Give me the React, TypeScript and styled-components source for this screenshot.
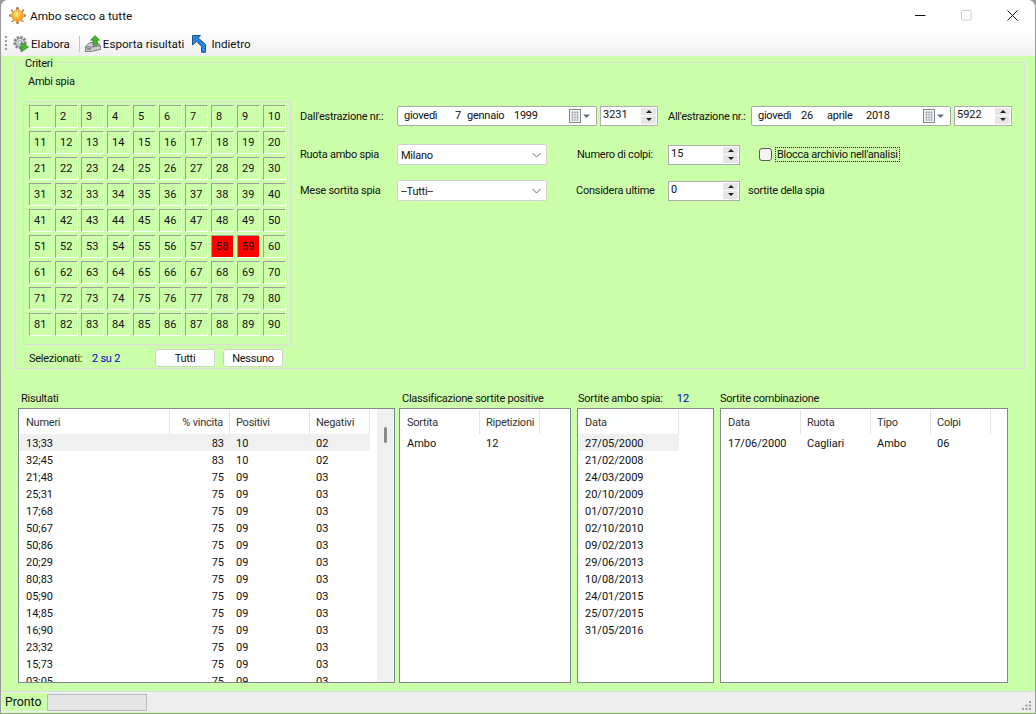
import React from 'react';
import styled, { createGlobalStyle } from 'styled-components';

const GlobalStyle = createGlobalStyle`
  html, body {
    margin: 0;
    height: 100%;
    overflow: hidden;
    background: #9a9a9a;
  }
  * {
    box-sizing: border-box;
  }
`;

const GREEN = '#ccffaa';

const Window = styled.div`
  width: 1034px;
  height: 713px;
  margin-left: 1px;
  display: flex;
  flex-direction: column;
  border-top-left-radius: 7px;
  border-top-right-radius: 7px;
  overflow: hidden;
  background: ${GREEN};
  font-family: Roboto, "Liberation Sans", sans-serif;
  font-size: 11px;
  letter-spacing: -0.25px;
  color: #111;
`;

const TitleBar = styled.div`
  height: 31px;
  flex: none;
  display: flex;
  align-items: center;
  padding-left: 8px;
  background: #fff;
`;

const Title = styled.span`
  margin-left: 4px;
  font-size: 11.8px;
  letter-spacing: 0;
  flex: 1;
`;

const WinButton = styled.div`
  width: 46px;
  height: 30px;
  display: flex;
  align-items: center;
  justify-content: center;
`;

const Toolbar = styled.div`
  height: 25px;
  flex: none;
  display: flex;
  align-items: center;
  padding-left: 4px;
  background: linear-gradient(#ffffff, #f0f0f0);
  font-size: 11.6px;
  letter-spacing: 0;
`;

const Grip = styled.div`
  width: 2px;
  height: 15px;
  margin-right: 6px;
  background: repeating-linear-gradient(#9a9a9a 0 2px, transparent 2px 4px);
`;

const ToolItem = styled.div<{ $end: number }>`
  display: flex;
  align-items: center;
  gap: 2px;
  margin-right: ${(p) => p.$end}px;
`;

const ToolSep = styled.div`
  width: 1px;
  height: 16px;
  background: #c4c4c4;
  margin-right: 5px;
`;

const Body = styled.div`
  flex: 1;
  min-height: 0;
  display: flex;
  flex-direction: column;
  padding: 6px 10px 8px 13px;
`;

const Criteria = styled.fieldset`
  position: relative;
  height: 307px;
  flex: none;
  margin: 0;
  padding: 0 0 0 8px;
  display: flex;
  border: 1px solid #dcdcdc;
`;

const Legend = styled.span`
  position: absolute;
  z-index: 1;
  left: 6px;
  top: -6px;
  padding: 0 4px;
  line-height: 13px;
  background: ${GREEN};
`;

const LeftColumn = styled.div`
  position: relative;
  width: 268px;
  flex: none;
  display: flex;
  flex-direction: column;
  &::after {
    content: '';
    position: absolute;
    left: -3px;
    right: -6px;
    bottom: -1px;
    height: 1px;
    background: ${GREEN};
  }
`;

const SpyLabel = styled.div`
  height: 38px;
  padding: 12px 0 0 5px;
  line-height: 14px;
`;

const NumberBox = styled.div`
  width: 268px;
  height: 244px;
  padding: 3px 0 0 5px;
  border: 1px solid #dcdcdc;
  display: grid;
  grid-template-columns: repeat(10, 23px);
  grid-auto-rows: 23px;
  column-gap: 3px;
  row-gap: 3px;
`;

const NumberCell = styled.div<{ $on?: boolean }>`
  display: flex;
  align-items: center;
  padding-left: 4px;
  letter-spacing: 0;
  border: 1px solid;
  border-color: #a0a0a0 #fff #fff #a0a0a0;
  background: ${(p) => (p.$on ? '#ff0000' : 'transparent')};
`;

const SelectedRow = styled.div`
  display: flex;
  align-items: center;
  height: 22px;
  margin-top: 2px;
  padding-left: 6px;
`;

const SelectedText = styled.span`
  width: 63px;
  flex: none;
`;

const SelectedCount = styled.span`
  color: #0000c0;
  width: 63px;
  flex: none;
`;

const PushButton = styled.button<{ $w: number }>`
  width: ${(p) => p.$w}px;
  height: 18px;
  margin-right: 8px;
  padding: 0;
  flex: none;
  background: #fff;
  border: 1px solid #d0d0d0;
  border-radius: 3px;
  font: inherit;
  letter-spacing: inherit;
  color: inherit;
`;

const Form = styled.div`
  margin: 42px 0 0 9px;
  display: flex;
  flex-direction: column;
`;

const FormRow = styled.div<{ $h: number }>`
  display: flex;
  align-items: center;
  height: 21px;
  margin-bottom: ${(p) => p.$h}px;
`;

const Label = styled.span<{ $w: number; $gap?: number; $down?: boolean }>`
  width: ${(p) => p.$w}px;
  margin-left: ${(p) => p.$gap ?? 0}px;
  padding-top: ${(p) => (p.$down ? 2 : 0)}px;
  flex: none;
  white-space: nowrap;
`;

const DateBox = styled.div`
  width: 200px;
  height: 20px;
  flex: none;
  display: flex;
  align-items: center;
  padding: 0 6px 0 6px;
  background: #fff;
  border: 1px solid #a8a8a8;
  border-radius: 2px;
`;

const DatePart = styled.span<{ $w: number }>`
  width: ${(p) => p.$w}px;
  flex: none;
`;

const DateIcon = styled.span`
  margin-left: auto;
  display: flex;
`;

const Spin = styled.div<{ $w: number; $gap?: number }>`
  width: ${(p) => p.$w}px;
  height: 20px;
  margin-left: ${(p) => p.$gap ?? 0}px;
  flex: none;
  display: flex;
  align-items: flex-start;
  justify-content: space-between;
  padding: 0 1px 0 2px;
  background: #fff;
  border: 1px solid #adadad;
  line-height: 15px;
  letter-spacing: 0;
`;

const SpinButtons = styled.div`
  width: 15px;
  height: 16px;
  margin-top: 1px;
  display: flex;
  flex-direction: column;
  gap: 1px;
`;

const SpinArrow = styled.div<{ $down?: boolean }>`
  flex: 1;
  display: flex;
  align-items: center;
  justify-content: center;
  background: #e6e6e6;
  &::after {
    content: '';
    border-left: 3px solid transparent;
    border-right: 3px solid transparent;
    ${(p) => (p.$down ? 'border-top: 3px solid #222;' : 'border-bottom: 3px solid #222;')}
  }
`;

const Combo = styled.div`
  width: 150px;
  height: 21px;
  flex: none;
  display: flex;
  align-items: center;
  justify-content: space-between;
  padding: 1px 5px 0 3px;
  background: #fff;
  border: 1px solid #d2d2d2;
  border-radius: 2px;
`;

const CheckBox = styled.span`
  width: 13px;
  height: 13px;
  margin-left: 19px;
  flex: none;
  background: #f4f4f4;
  border: 1px solid #5a5a5a;
  border-radius: 3px;
`;

const FocusLabel = styled.span`
  margin-left: 3px;
  padding: 0 1px;
  border: 1px dotted #222;
  line-height: 13px;
  white-space: nowrap;
`;

const Lower = styled.div`
  flex: 1;
  min-height: 0;
  display: flex;
  gap: 6px;
  margin-top: 22px;
  padding-left: 4px;
`;

const Section = styled.div<{ $w: number; $tight?: boolean }>`
  width: ${(p) => p.$w}px;
  margin-right: ${(p) => (p.$tight ? -2 : 0)}px;
  flex: none;
  display: flex;
  flex-direction: column;
`;

const SectionTitle = styled.div<{ $pad: number }>`
  height: 17px;
  display: flex;
  padding: 1px 0 0 ${(p) => p.$pad}px;
  line-height: 14px;
  white-space: nowrap;
`;

const TitleCount = styled.span`
  color: #0000c0;
  letter-spacing: 0;
  margin-left: 14px;
`;

const Panel = styled.div`
  position: relative;
  flex: 1;
  min-height: 0;
  overflow: hidden;
  background: #fff;
  border: 1px solid #828790;
`;

const HeadRow = styled.div`
  height: 25px;
  display: flex;
  align-items: center;
`;

const HeadCell = styled.div<{ $w: number; $right?: boolean }>`
  width: ${(p) => p.$w}px;
  height: 24px;
  flex: none;
  display: flex;
  align-items: center;
  justify-content: ${(p) => (p.$right ? 'flex-end' : 'flex-start')};
  padding: 2px 6px 0;
  border-right: 1px solid #e5e5e5;
  color: #333;
  &:first-child {
    padding-left: 7px;
  }
`;

const DataRow = styled.div<{ $on?: boolean; $w: number }>`
  width: ${(p) => p.$w}px;
  height: 17px;
  display: flex;
  align-items: center;
  letter-spacing: 0;
  background: ${(p) => (p.$on ? '#f0f0f0' : 'transparent')};
`;

const DataCell = styled.div<{ $w: number; $right?: boolean }>`
  width: ${(p) => p.$w}px;
  flex: none;
  padding: 1px 6px 0;
  text-align: ${(p) => (p.$right ? 'right' : 'left')};
  &:first-child {
    padding-left: 7px;
  }
`;

const ScrollTrack = styled.div`
  position: absolute;
  top: 0;
  right: 0;
  bottom: 0;
  width: 17px;
  background: #f0f0f0;
`;

const ScrollThumb = styled.div`
  position: absolute;
  top: 18px;
  left: 7px;
  width: 3px;
  height: 16px;
  background: #8a8a8a;
  border-radius: 2px;
`;

const StatusBar = styled.div`
  height: 21px;
  flex: none;
  margin-bottom: 1px;
  display: flex;
  align-items: center;
  padding-left: 1px;
  background: #eeeeee;
  border-top: 1px solid #dcdcdc;
`;

const StatusText = styled.span`
  width: 45px;
  height: 18px;
  flex: none;
  padding-left: 3px;
  font-size: 12.3px;
  letter-spacing: 0;
  line-height: 18px;
  background: ${GREEN};
`;

const Progress = styled.div`
  width: 100px;
  height: 17px;
  background: #e6e6e6;
  border: 1px solid #bcbcbc;
`;

const ResizeGrip = styled.svg`
  margin-left: auto;
  margin-right: 3px;
  align-self: flex-end;
  margin-bottom: 1px;
`;

const SunIcon = () => (
  <svg width="17" height="17" viewBox="0 0 17 17">
    <defs>
      <radialGradient id="sun" cx="0.42" cy="0.38" r="0.7">
        <stop offset="0" stopColor="#fff0a0" />
        <stop offset="0.55" stopColor="#fbb62a" />
        <stop offset="1" stopColor="#ee8a12" />
      </radialGradient>
    </defs>
    <path
      d="M8.500 0l1 2.500M8.500 0l-1 2.500M14.500 2.500l-1 2.500M2.500 2.500l1 2.500M17 8.500l-2.500 1M17 8.500l-2.500-1M0 8.500l2.500 1M0 8.500l2.500-1M8.500 17l1-2.500M8.500 17l-1-2.500M14.500 14.500l-2.500-1M2.500 14.500l2.500-1"
      stroke="#b8691c"
      strokeWidth="1.300"
    />
    <circle cx="8.500" cy="8.500" r="5.600" fill="url(#sun)" stroke="#d2811c" strokeWidth=".7" />
  </svg>
);

const GearIcon = () => (
  <svg width="16" height="18" viewBox="0 0 17 18">
    <circle cx="7.500" cy="7.500" r="5.600" fill="none" stroke="#7d858c" strokeWidth="3" strokeDasharray="2.400 1.300" />
    <circle cx="7.500" cy="7.500" r="4.600" fill="#d4d8dc" stroke="#6c7278" strokeWidth=".8" />
    <circle cx="7.500" cy="7.500" r="2" fill="#fff" stroke="#7d858c" strokeWidth=".8" />
    <path d="M8.500 7l8 5.200-8 5.300z" fill="#43b52e" stroke="#2c7d1e" strokeWidth=".7" />
  </svg>
);

const ExportIcon = () => (
  <svg width="16" height="17" viewBox="0 0 16 17">
    <path d="M.5 11.500L5 7.500h7.500l3 3.500v3.500L6 16.500H.5z" fill="#c9cdd1" stroke="#5f656a" strokeWidth=".8" />
    <path d="M.5 12h6l9-1.500" fill="none" stroke="#5f656a" strokeWidth=".8" />
    <path d="M2 14h4" stroke="#3e4347" />
    <path d="M10 .500l4.500 4.700h-2.300v5H8v-5H5.500z" fill="#45b42f" stroke="#2c7d1e" strokeWidth=".7" />
  </svg>
);

const BackIcon = () => (
  <svg width="17" height="18" viewBox="0 0 17 18">
    <path d="M.5.500h8L6.200 3l7.300 6.300v8h-4v-6L4.500 6.500.5 10z" fill="#2d86dc" stroke="#164a90" strokeWidth=".9" />
  </svg>
);

const CalendarIcon = () => (
  <svg width="21" height="14" viewBox="0 0 21 14">
    <rect x=".5" y=".5" width="11" height="13" fill="#f2f2f2" stroke="#7f8a96" />
    <path d="M2 3.500h8M2 6h8M2 8.500h8M2 11h8M3.500 2v10M6 2v10M8.500 2v10" stroke="#a8b0b8" strokeWidth=".8" />
    <path d="M14 5.500h7l-3.500 3.500z" fill="#5f6f82" />
  </svg>
);

const Chevron = () => (
  <svg width="9" height="6" viewBox="0 0 9 6">
    <path d="M.5 1l4 4 4-4" fill="none" stroke="#666" />
  </svg>
);

const SpinBox = ({ value, w, gap }: { value: string; w: number; gap?: number }) => (
  <Spin $w={w} $gap={gap}>
    <span>{value}</span>
    <SpinButtons>
      <SpinArrow />
      <SpinArrow $down />
    </SpinButtons>
  </Spin>
);

const DatePicker = ({ parts }: { parts: [string, number][] }) => (
  <DateBox>
    {parts.map(([text, w]) => (
      <DatePart key={text} $w={w}>
        {text}
      </DatePart>
    ))}
    <DateIcon>
      <CalendarIcon />
    </DateIcon>
  </DateBox>
);

type Column = { title: string; w: number; right?: boolean };

const DataTable = ({ columns, rows, rowW }: { columns: Column[]; rows: string[][]; rowW?: number }) => (
  <>
    <HeadRow>
      {columns.map((c) => (
        <HeadCell key={c.title} $w={c.w} $right={c.right}>
          {c.title}
        </HeadCell>
      ))}
    </HeadRow>
    {rows.map((row, i) => (
      <DataRow key={row.join()} $on={i === 0 && !!rowW} $w={rowW ?? columns.reduce((a, c) => a + c.w, 0)}>
        {row.map((text, j) => (
          <DataCell key={j} $w={columns[j].w} $right={columns[j].right}>
            {text}
          </DataCell>
        ))}
      </DataRow>
    ))}
  </>
);

const pairs = [
  ['13;33', '83', '10', '02'],
  ['32;45', '83', '10', '02'],
  ...['21;48', '25;31', '17;68', '50;67', '50;86', '20;29', '80;83', '05;90', '14;85', '16;90', '23;32', '15;73', '03;05'].map(
    (p) => [p, '75', '09', '03'],
  ),
];

const dates = [
  '27/05/2000', '21/02/2008', '24/03/2009', '20/10/2009', '01/07/2010', '02/10/2010',
  '09/02/2013', '29/06/2013', '10/08/2013', '24/01/2015', '25/07/2015', '31/05/2016',
].map((d) => [d]);

const numbers = Array.from({ length: 90 }, (_, i) => i + 1);

export default function App() {
  return (
    <>
      <GlobalStyle />
      <Window>
        <TitleBar>
          <SunIcon />
          <Title>Ambo secco a tutte</Title>
          <WinButton>
            <svg width="11" height="11" viewBox="0 0 11 11">
              <path d="M0 5.500h10.500" stroke="#111" />
            </svg>
          </WinButton>
          <WinButton>
            <svg width="11" height="11" viewBox="0 0 11 11">
              <rect x=".5" y=".5" width="9.500" height="9.500" rx="1" fill="none" stroke="#ccc" />
            </svg>
          </WinButton>
          <WinButton>
            <svg width="11" height="11" viewBox="0 0 11 11">
              <path d="M.5.500l10 10M10.500.500l-10 10" stroke="#111" />
            </svg>
          </WinButton>
        </TitleBar>
        <Toolbar>
          <Grip />
          <ToolItem $end={9}>
            <GearIcon />
            Elabora
          </ToolItem>
          <ToolSep />
          <ToolItem $end={8}>
            <ExportIcon />
            Esporta risultati
          </ToolItem>
          <ToolItem $end={0}>
            <BackIcon />
            Indietro
          </ToolItem>
        </Toolbar>
        <Body>
          <Criteria>
            <Legend>Criteri</Legend>
            <LeftColumn>
              <SpyLabel>Ambi spia</SpyLabel>
              <NumberBox>
                {numbers.map((n) => (
                  <NumberCell key={n} $on={n === 58 || n === 59}>
                    {n}
                  </NumberCell>
                ))}
              </NumberBox>
              <SelectedRow>
                <SelectedText>Selezionati:</SelectedText>
                <SelectedCount>2 su 2</SelectedCount>
                <PushButton $w={60}>Tutti</PushButton>
                <PushButton $w={60}>Nessuno</PushButton>
              </SelectedRow>
            </LeftColumn>
            <Form>
              <FormRow $h={18}>
                <Label $w={97} $down>Dall'estrazione nr.:</Label>
                <DatePicker parts={[['giovedì', 51], ['7', 12], ['gennaio', 47], ['1999', 30]]} />
                <SpinBox value="3231" w={58} gap={3} />
                <Label $w={83} $gap={10} $down>All'estrazione nr.:</Label>
                <DatePicker parts={[['giovedì', 43], ['26', 26], ['aprile', 39], ['2018', 30]]} />
                <SpinBox value="5922" w={58} gap={3} />
              </FormRow>
              <FormRow $h={15}>
                <Label $w={97}>Ruota ambo spia</Label>
                <Combo>
                  Milano
                  <Chevron />
                </Combo>
                <Label $w={91} $gap={30}>Numero di colpi:</Label>
                <SpinBox value="15" w={72} />
                <CheckBox />
                <FocusLabel>Blocca archivio nell'analisi</FocusLabel>
              </FormRow>
              <FormRow $h={0}>
                <Label $w={97}>Mese sortita spia</Label>
                <Combo>
                  --Tutti--
                  <Chevron />
                </Combo>
                <Label $w={92} $gap={29}>Considera ultime</Label>
                <SpinBox value="0" w={72} />
                <Label $w={90} $gap={8}>sortite della spia</Label>
              </FormRow>
            </Form>
          </Criteria>
          <Lower>
            <Section $w={377} $tight>
              <SectionTitle $pad={3}>Risultati</SectionTitle>
              <Panel>
                <DataTable
                  rowW={351}
                  columns={[
                    { title: 'Numeri', w: 151 },
                    { title: '% vincita', w: 60, right: true },
                    { title: 'Positivi', w: 80 },
                    { title: 'Negativi', w: 60 },
                  ]}
                  rows={pairs}
                />
                <ScrollTrack>
                  <ScrollThumb />
                </ScrollTrack>
              </Panel>
            </Section>
            <Section $w={172}>
              <SectionTitle $pad={3}>Classificazione sortite positive</SectionTitle>
              <Panel>
                <DataTable
                  columns={[
                    { title: 'Sortita', w: 80 },
                    { title: 'Ripetizioni', w: 60 },
                  ]}
                  rows={[['Ambo', '12']]}
                />
              </Panel>
            </Section>
            <Section $w={137}>
              <SectionTitle $pad={1}>
                Sortite ambo spia:
                <TitleCount>12</TitleCount>
              </SectionTitle>
              <Panel>
                <DataTable columns={[{ title: 'Data', w: 101 }]} rows={dates} rowW={101} />
              </Panel>
            </Section>
            <Section $w={288}>
              <SectionTitle $pad={0}>Sortite combinazione</SectionTitle>
              <Panel>
                <DataTable
                  columns={[
                    { title: 'Data', w: 80 },
                    { title: 'Ruota', w: 70 },
                    { title: 'Tipo', w: 60 },
                    { title: 'Colpi', w: 60 },
                  ]}
                  rows={[['17/06/2000', 'Cagliari', 'Ambo', '06']]}
                />
              </Panel>
            </Section>
          </Lower>
        </Body>
        <StatusBar>
          <StatusText>Pronto</StatusText>
          <Progress />
          <ResizeGrip width="11" height="11" viewBox="0 0 11 11">
            <path d="M8 1h2v2H8zM4.500 4.500h2v2h-2zM8 4.500h2v2H8zM1 8h2v2H1zM4.500 8h2v2h-2zM8 8h2v2H8z" fill="#a0a0a0" />
          </ResizeGrip>
        </StatusBar>
      </Window>
    </>
  );
}
